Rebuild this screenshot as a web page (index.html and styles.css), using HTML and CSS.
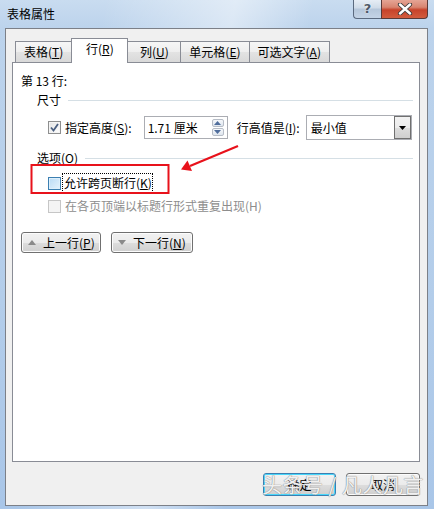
FILE: index.html
```html
<!DOCTYPE html>
<html lang="zh-CN">
<head>
<meta charset="utf-8">
<title>表格属性</title>
<link rel="stylesheet" href="styles.css">
</head>
<body>
<div class="window">
  <div class="titlebar">
    <span class="title">表格属性</span>
    <div class="caption-btns">
      <div class="cap-help">?</div>
      <div class="cap-close">
        <svg width="16" height="12" viewBox="0 0 16 12"><path d="M3 1.5 L13 10.5 M13 1.5 L3 10.5" stroke="#3b3b3b" stroke-width="4.2" stroke-linecap="round"/><path d="M3 1.5 L13 10.5 M13 1.5 L3 10.5" stroke="#ffffff" stroke-width="2.4" stroke-linecap="round"/></svg>
      </div>
    </div>
  </div>
  <div class="client">
    <div class="tabs">
      <div class="tab">表格(<u>T</u>)</div>
      <div class="tab active">行(<u>R</u>)</div>
      <div class="tab">列(<u>U</u>)</div>
      <div class="tab">单元格(<u>E</u>)</div>
      <div class="tab">可选文字(<u>A</u>)</div>
    </div>
    <div class="panel">
      <div class="rowtitle">第 13 行:</div>
      <div class="section"><span>尺寸</span><i class="rule"></i></div>
      <div class="size-row">
        <span class="cb checked"><svg width="9" height="9" viewBox="0 0 9 9"><path d="M1 4.5 L3.5 7.5 L8 1" fill="none" stroke="#4a5f80" stroke-width="1.8"/></svg></span>
        <span class="lbl">指定高度(<u>S</u>):</span>
        <div class="spin">
          <span class="val">1.71 厘米</span>
          <div class="spin-btns">
            <div class="sb"><svg width="7" height="4" viewBox="0 0 7 4"><path d="M0 4 L3.5 0 L7 4Z" fill="#4f6d9c"/></svg></div>
            <div class="sb"><svg width="7" height="4" viewBox="0 0 7 4"><path d="M0 0 L3.5 4 L7 0Z" fill="#4f6d9c"/></svg></div>
          </div>
        </div>
        <span class="lbl lbl2">行高值是(<u>I</u>):</span>
        <div class="select">
          <span class="val">最小值</span>
          <div class="drop"><svg width="7" height="4" viewBox="0 0 7 4"><path d="M0 0 L7 0 L3.5 4Z" fill="#000"/></svg></div>
        </div>
      </div>
      <div class="section sec2"><span>选项(<u>O</u>)</span><i class="rule"></i></div>
      <div class="opt">
        <span class="cb hot"></span>
        <span class="lbl focus">允许跨页断行(<u>K</u>)</span>
      </div>
      <div class="opt disabled">
        <span class="cb dis"></span>
        <span class="lbl">在各页顶端以标题行形式重复出现(H)</span>
      </div>
      <div class="nav-btns">
        <div class="btn nav"><svg width="8" height="5" viewBox="0 0 8 5"><path d="M0 5 L4 0 L8 5Z" fill="#8a8a8a"/></svg><span>上一行(<u>P</u>)</span></div>
        <div class="btn nav nav2"><svg width="8" height="5" viewBox="0 0 8 5"><path d="M0 0 L8 0 L4 5Z" fill="#8a8a8a"/></svg><span>下一行(<u>N</u>)</span></div>
      </div>
    </div>
    <div class="footer">
      <div class="btn ok">确定</div>
      <div class="btn cancel">取消</div>
    </div>
  </div>
  <svg class="annot" width="434" height="509" viewBox="0 0 434 509">
    <rect x="31.5" y="165" width="137" height="28" fill="none" stroke="#e8121b" stroke-width="2"/>
    <path d="M238 146 L190 166" stroke="#e8121b" stroke-width="2.2" fill="none"/>
    <path d="M181 169.5 L187.5 160.5 L192 171Z" fill="#e8121b"/>
  </svg>
  <div class="watermark">头条号 / 凡人凡言</div>
</div>
</body>
</html>
```
FILE: styles.css
```css
* { box-sizing: border-box; }
html, body { margin: 0; padding: 0; }
body {
  width: 434px;
  height: 509px;
  overflow: hidden;
  font-family: "Noto Sans CJK SC", "Noto Sans", sans-serif;
  font-size: 12px;
  color: #000;
}
u { text-decoration: underline; text-underline-offset: 1px; }

.window {
  position: relative;
  width: 434px;
  height: 509px;
  background:
    linear-gradient(100deg, rgba(255,255,255,0) 20%, rgba(255,255,255,0.45) 45%, rgba(255,255,255,0) 60%),
    linear-gradient(180deg, #c9dcf0 0px, #bcd3ec 28px, #b3cdea 300px, #a9c6e8 509px);
  display: flex;
  flex-direction: column;
}

.titlebar {
  height: 28px;
  display: flex;
  align-items: flex-start;
  padding-left: 7px;
}
.title {
  line-height: 16px;
  margin-top: 6px;
  color: #000;
}
.caption-btns {
  margin-left: auto;
  margin-right: 6px;
  display: flex;
  height: 19px;
}
.cap-help {
  width: 28px;
  height: 19px;
  border: 1px solid #5b6a7f;
  border-top: none;
  border-right: none;
  border-radius: 0 0 0 4px;
  background: linear-gradient(180deg, #e6edf5 0%, #cfdbe8 45%, #b5c6da 50%, #c4d4e6 100%);
  color: #4e5867;
  font-family: "DejaVu Sans", sans-serif;
  font-weight: bold;
  font-size: 13px;
  line-height: 17px;
  text-align: center;
  text-shadow: 0 0 2px #fff;
}
.cap-close {
  width: 47px;
  height: 19px;
  border: 1px solid #5a3a38;
  border-top: none;
  border-radius: 0 0 4px 0;
  background: linear-gradient(180deg, #e5a595 0%, #d88470 40%, #c7432b 55%, #d25c3e 100%);
  display: flex;
  align-items: center;
  justify-content: center;
}

.client {
  margin: 0 6px 0 5px;
  height: 478px;
  border: 1px solid #7c8088;
  background: #f0f0f0;
  display: flex;
  flex-direction: column;
}

.tabs {
  display: flex;
  align-items: flex-end;
  padding: 8px 0 0 9px;
  height: 33px;
  position: relative;
  z-index: 1;
}
.tab {
  height: 21px;
  min-width: 54px;
  padding: 0 8px;
  margin-right: -1px;
  border: 1px solid #898c95;
  border-bottom: none;
  background: linear-gradient(180deg, #f6f6f6 0%, #eeeeee 50%, #e3e3e3 51%, #d9d9d9 100%);
  line-height: 19px;
  text-align: center;
}
.tab.active {
  height: 25px;
  min-width: 57px;
  margin-bottom: -1px;
  background: #fff;
  line-height: 20px;
  padding-bottom: 4px;
  position: relative;
}

.panel {
  margin: 0 7px 0 6px;
  height: 400px;
  border: 1px solid #898c95;
  background: #fff;
  padding: 10px 6px 0 8px;
}
.rowtitle { line-height: 16px; }

.section {
  display: flex;
  align-items: center;
  margin: 3px 0 0 16px;
  line-height: 16px;
}
.section .rule {
  flex: 1;
  height: 1px;
  margin-left: 7px;
  background: #d5dfe5;
}
.section.sec2 { margin-top: 11px; }

.size-row {
  display: flex;
  align-items: center;
  margin-top: 8px;
  height: 23px;
  padding-left: 27px;
}
.cb {
  width: 13px;
  height: 13px;
  border: 1px solid #8e8f8f;
  background: linear-gradient(135deg, #dcdcdc 0%, #fbfbfb 100%);
  box-shadow: inset 0 0 0 1px #f4f4f4;
  display: inline-flex;
  align-items: center;
  justify-content: center;
  flex: none;
}
.cb.checked { background: linear-gradient(135deg, #e3e3e3, #ffffff); }
.cb.hot {
  border-color: #3c7fb1;
  background: linear-gradient(135deg, #b9dbf5 0%, #e6f3fc 100%);
  box-shadow: inset 0 0 0 1px #def0fc;
}
.cb.dis {
  border-color: #c6c6c6;
  background: #f4f4f4;
  box-shadow: none;
}
.lbl { margin-left: 4px; line-height: 16px; white-space: nowrap; }
.lbl2 { margin-left: 9px; }

.spin {
  margin-left: 12px;
  width: 84px;
  height: 23px;
  border: 1px solid #abadb3;
  background: #fff;
  display: flex;
  align-items: center;
  padding-left: 3px;
}
.spin .val { flex: 1; line-height: 16px; }
.spin-btns {
  display: flex;
  flex-direction: column;
  width: 12px;
  height: 17px;
  margin-right: 3px;
}
.sb {
  flex: 1;
  border: 1px solid #b6bcc6;
  background: linear-gradient(180deg, #f6f8fb, #dfe6ee);
  display: flex;
  align-items: center;
  justify-content: center;
  border-radius: 2px;
}
.sb + .sb { margin-top: 1px; }

.select {
  margin-left: 6px;
  width: 106px;
  height: 25px;
  border: 1px solid #abadb3;
  background: #fff;
  display: flex;
  align-items: center;
  padding-left: 4px;
}
.select .val { flex: 1; line-height: 16px; }
.drop {
  width: 17px;
  height: 23px;
  border: 1px solid #707070;
  background: linear-gradient(180deg, #f2f2f2 0%, #ebebeb 50%, #dddddd 51%, #cfcfcf 100%);
  display: flex;
  align-items: center;
  justify-content: center;
}

.opt {
  display: flex;
  align-items: center;
  height: 18px;
  padding-left: 27px;
  margin-top: 8px;
}
.opt + .opt { margin-top: 5px; }
.opt .lbl { margin-left: 4px; }
.opt .focus {
  outline: 1px dotted #000;
  outline-offset: 0;
  padding: 1px 0 1px 1px;
  margin-left: 2px;
}
.opt.disabled .lbl { color: #8d8d8d; }

.btn {
  height: 21px;
  border: 1px solid #707070;
  border-radius: 3px;
  background: linear-gradient(180deg, #f2f2f2 0%, #ebebeb 50%, #dddddd 51%, #cfcfcf 100%);
  box-shadow: inset 0 0 0 1px #fcfcfc;
  display: flex;
  align-items: center;
  justify-content: center;
  line-height: 16px;
}
.nav-btns {
  display: flex;
  gap: 10px;
  margin-top: 17px;
}
.nav {
  width: 80px;
  justify-content: flex-start;
  padding-left: 6px;
}
.nav svg { margin-right: 7px; }
.nav2 { width: 82px; }

.footer {
  display: flex;
  justify-content: flex-end;
  gap: 10px;
  padding: 11px 7px 0 0;
}
.footer .btn { height: 23px; }
.ok {
  width: 73px;
  border-color: #3c7fb1;
  box-shadow: inset 0 0 0 1px #48d7fb;
}
.cancel { width: 74px; }

.annot {
  position: absolute;
  left: 0;
  top: 0;
  pointer-events: none;
}
.watermark {
  position: absolute;
  left: 262px;
  top: 472px;
  font-size: 20px;
  line-height: 26px;
  letter-spacing: 0.5px;
  color: rgba(255,255,255,0.9);
  text-shadow: 0 0 1px #8a8a8a, 0 0 1px #8a8a8a;
  white-space: nowrap;
  pointer-events: none;
}
```
